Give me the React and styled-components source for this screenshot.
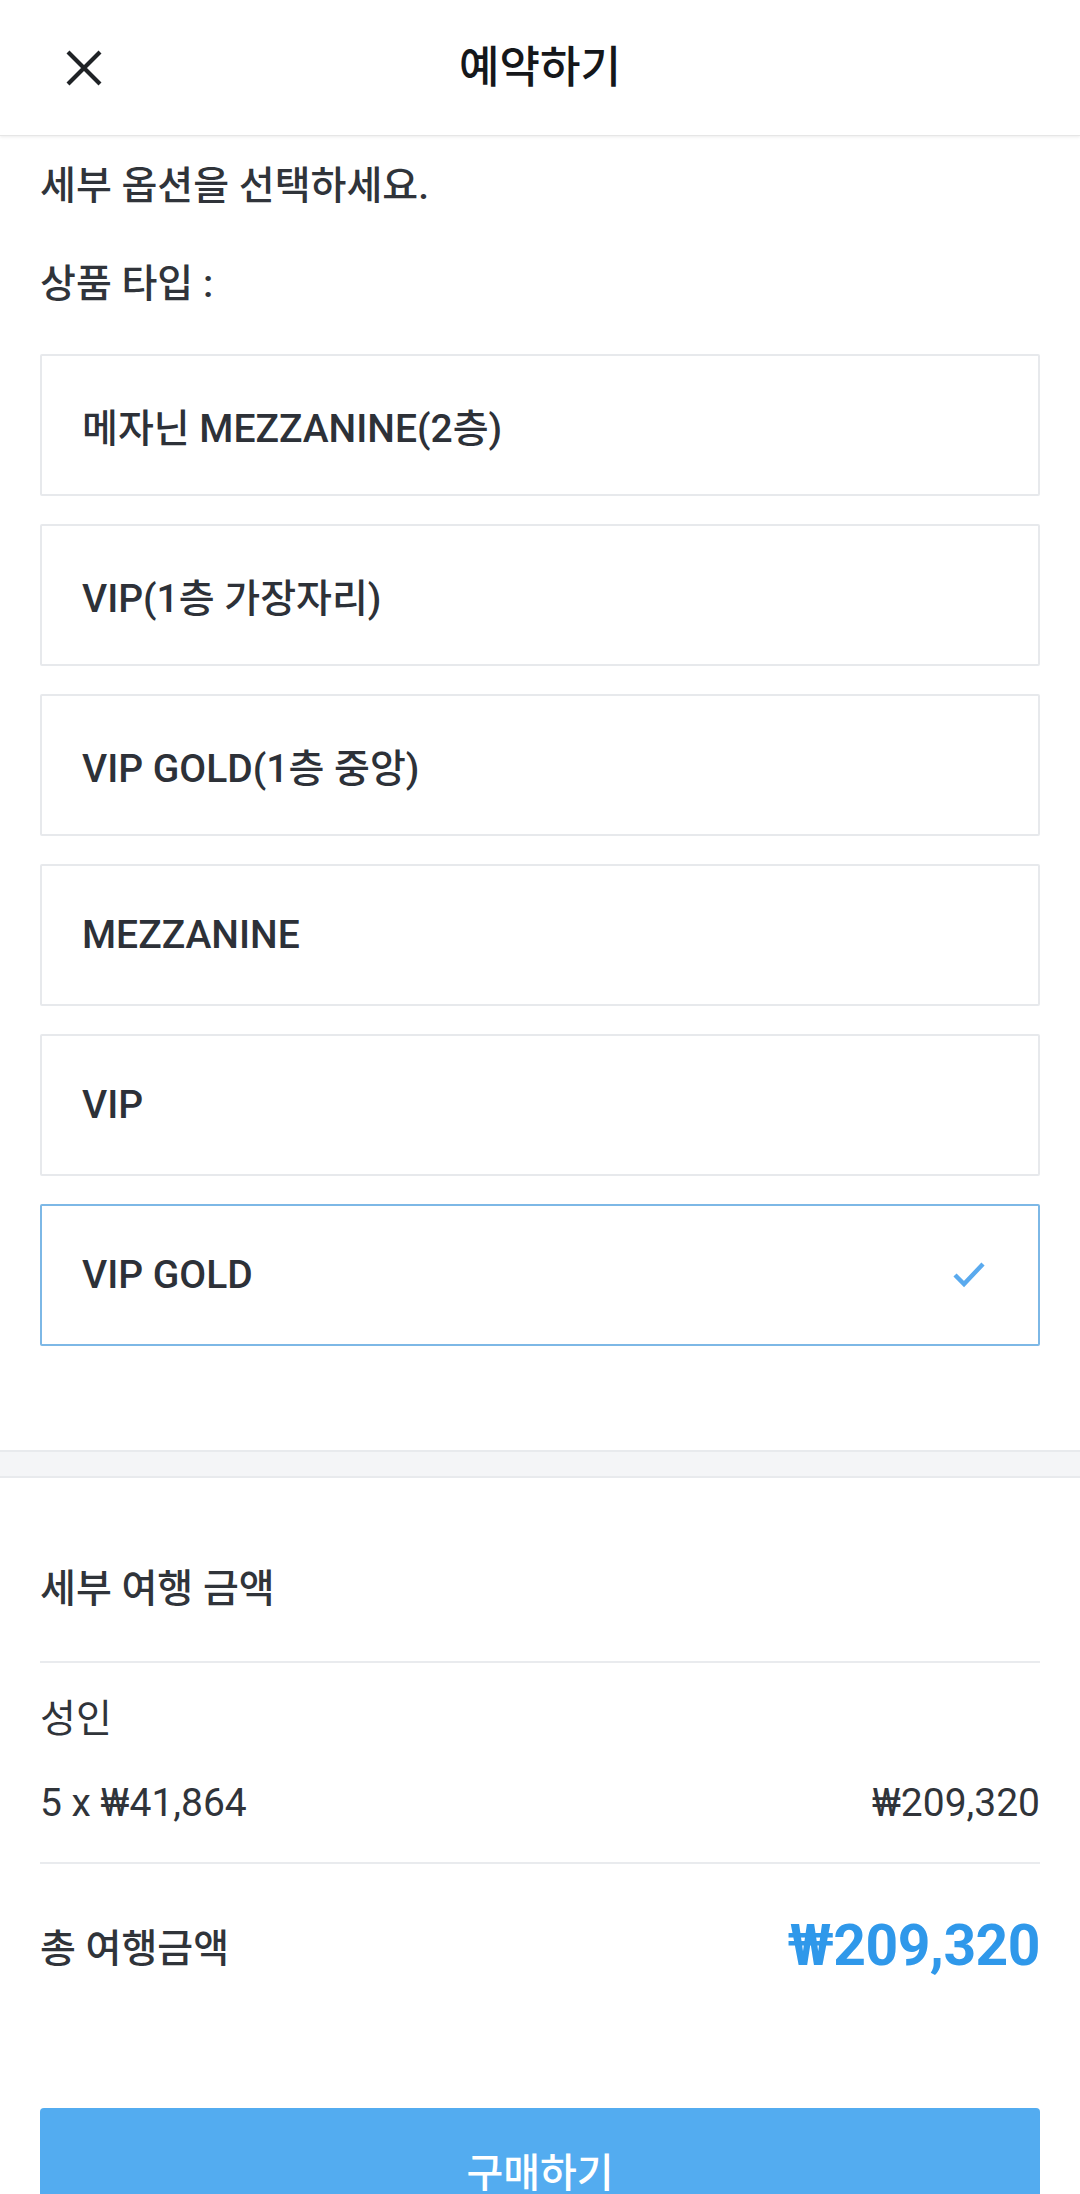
import React, { useState } from "react";
import styled, { createGlobalStyle } from "styled-components";

const GlobalStyle = createGlobalStyle`
  * { box-sizing: border-box; }
  body {
    margin: 0;
    background: #ffffff;
    font-family: Roboto, "Noto Sans CJK KR", sans-serif;
    color: #30343a;
  }
`;

const Page = styled.div`
  width: 1080px;
  min-height: 2194px;
  background: #fff;
  overflow: hidden;
`;

const Header = styled.header`
  height: 136px;
  display: grid;
  grid-template-columns: 136px 1fr 136px;
  align-items: center;
  border-bottom: 1px solid #e6e6e6;
  box-shadow: 0 1px 3px rgba(0, 0, 0, 0.08);
`;

const CloseButton = styled.button`
  width: 80px;
  height: 80px;
  margin-left: 44px;
  padding: 0;
  border: 0;
  background: none;
  display: flex;
  align-items: center;
  justify-content: center;
  cursor: pointer;
`;

const Title = styled.h1`
  margin: 0;
  text-align: center;
  font-size: 44px;
  font-weight: 500;
  color: #15171a;
  line-height: 56px;
`;

const Section = styled.section`
  padding: 22px 40px 0;
`;

const Intro = styled.p`
  margin: 0;
  font-size: 39px;
  font-weight: 500;
  line-height: 56px;
`;

const Label = styled.p`
  margin: 42px 0 0;
  font-size: 39px;
  font-weight: 500;
  line-height: 56px;
`;

const OptionList = styled.div`
  margin-top: 42px;
  display: flex;
  flex-direction: column;
  gap: 28px;
`;

const Option = styled.button`
  height: 142px;
  width: 100%;
  padding: 0 52px 0 40px;
  display: flex;
  align-items: center;
  justify-content: space-between;
  background: #fff;
  border: ${(p) => (p.$selected ? "2px solid #7db8e6" : "2px solid #e7e9ec")};
  border-radius: 2px;
  font-family: inherit;
  font-size: 39px;
  font-weight: 500;
  color: #2d3138;
  text-align: left;
  cursor: pointer;
`;

const Band = styled.div`
  margin-top: 104px;
  height: 28px;
  background: #f4f5f7;
  border-top: 2px solid #e8eaed;
  border-bottom: 2px solid #e8eaed;
`;

const Summary = styled.section`
  padding: 83px 40px 0;
`;

const SummaryTitle = styled.h2`
  margin: 0;
  font-size: 39px;
  font-weight: 500;
  line-height: 56px;
`;

const Divider = styled.hr`
  margin: ${(p) => p.$top}px 0 0;
  border: 0;
  height: 2px;
  background: #e9ebee;
`;

const Row = styled.div`
  margin-top: ${(p) => p.$top}px;
  display: flex;
  justify-content: space-between;
  align-items: center;
  height: ${(p) => p.$height || 56}px;
  font-size: 39px;
  font-weight: ${(p) => p.$weight || 400};
  color: #30343a;
`;

const Total = styled.span`
  font-size: 57px;
  font-weight: 700;
  color: #2f98ea;
  letter-spacing: -0.5px;
`;

const BuyButton = styled.button`
  display: block;
  width: 1000px;
  height: 124px;
  margin: 123px 40px 0;
  border: 0;
  border-radius: 4px;
  background: #53acf0;
  color: #fff;
  font-family: inherit;
  font-size: 40px;
  font-weight: 500;
  cursor: pointer;
`;

const CloseIcon = () => (
  <svg width="36" height="36" viewBox="0 0 36 36">
    <path d="M2 2 L34 34 M34 2 L2 34" stroke="#1f2226" strokeWidth="4.2" fill="none" />
  </svg>
);

const CheckIcon = () => (
  <svg width="34" height="28" viewBox="0 0 34 28">
    <path d="M3 14 L12 23 L31 3" stroke="#5aaaee" strokeWidth="4.4" fill="none" />
  </svg>
);

const options = [
  "메자닌 MEZZANINE(2층)",
  "VIP(1층 가장자리)",
  "VIP GOLD(1층 중앙)",
  "MEZZANINE",
  "VIP",
  "VIP GOLD",
];

export default function App() {
  const [selected, setSelected] = useState(5);

  return (
    <Page>
      <GlobalStyle />
      <Header>
        <CloseButton aria-label="닫기">
          <CloseIcon />
        </CloseButton>
        <Title>예약하기</Title>
        <span />
      </Header>

      <Section>
        <Intro>세부 옵션을 선택하세요.</Intro>
        <Label>상품 타입 :</Label>
        <OptionList>
          {options.map((name, i) => (
            <Option key={name} $selected={selected === i} onClick={() => setSelected(i)}>
              <span>{name}</span>
              {selected === i && <CheckIcon />}
            </Option>
          ))}
        </OptionList>
      </Section>

      <Band />

      <Summary>
        <SummaryTitle>세부 여행 금액</SummaryTitle>
        <Divider $top={44} />
        <Row $top={24}>성인</Row>
        <Row $top={32}>
          <span>5 x ₩41,864</span>
          <span>₩209,320</span>
        </Row>
        <Divider $top={31} />
        <Row $top={41} $height={80} $weight={500}>
          <span>총 여행금액</span>
          <Total>₩209,320</Total>
        </Row>
      </Summary>

      <BuyButton>구매하기</BuyButton>
    </Page>
  );
}
